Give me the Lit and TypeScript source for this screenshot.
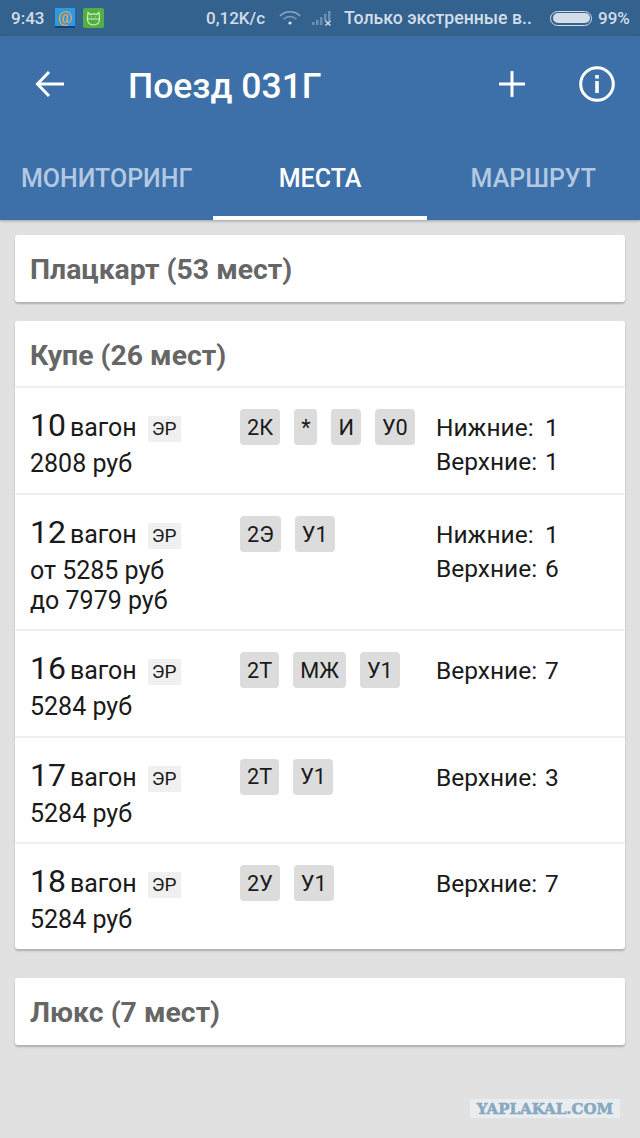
import {css, html, LitElement, svg} from 'lit';
import {customElement} from 'lit/decorators.js';

interface Car {
  num: string;
  prices: string[];
  chips: string[];
  lower?: number;
  upper: number;
}

const cars: Car[] = [
  {num: '10', prices: ['2808 руб'], chips: ['2К', '*', 'И', 'У0'], lower: 1, upper: 1},
  {num: '12', prices: ['от 5285 руб', 'до 7979 руб'], chips: ['2Э', 'У1'], lower: 1, upper: 6},
  {num: '16', prices: ['5284 руб'], chips: ['2Т', 'МЖ', 'У1'], upper: 7},
  {num: '17', prices: ['5284 руб'], chips: ['2Т', 'У1'], upper: 3},
  {num: '18', prices: ['5284 руб'], chips: ['2У', 'У1'], upper: 7},
];

const wifiIcon = svg`<svg class="wifi" viewBox="0 0 22 16" fill="none" stroke="#8fa9c4" stroke-width="1.5">
  <path d="M1 6a14 14 0 0 1 20 0" /><path d="M4.5 9.3a9 9 0 0 1 13 0" opacity=".8" /><circle cx="11" cy="13" r="1.6" fill="#dfe7f0" stroke="none" />
</svg>`;

const signalIcon = svg`<svg class="signal" viewBox="0 0 24 16">
  <g fill="#6f8fb0"><rect x="0" y="12" width="2.5" height="3" /><rect x="4" y="10" width="2.5" height="5" /><rect x="8" y="7" width="2.5" height="8" /><rect x="12" y="4" width="2.5" height="7" /><rect x="16" y="1" width="2.5" height="10" /></g>
  <path d="M13.5 11l5 4.5M18.5 11l-5 4.5" stroke="#dfe7f0" stroke-width="1.2" />
</svg>`;

@customElement('app-root')
export class AppRoot extends LitElement {
  renderCar(car: Car) {
    return html`
      <div class="row">
        <div class="info">
          <div class="head">
            <span class="num">${car.num}</span>
            <span class="word">вагон</span>
            <span class="tag">ЭР</span>
          </div>
          ${car.prices.map((p) => html`<div class="price">${p}</div>`)}
        </div>
        <div class="chips">${car.chips.map((c) => html`<span class="chip">${c}</span>`)}</div>
        <div class="seats">
          ${car.lower
            ? html`<div class="seat"><span class="label">Нижние:</span><span>${car.lower}</span></div>`
            : ''}
          <div class="seat"><span class="label">Верхние:</span><span>${car.upper}</span></div>
        </div>
      </div>
    `;
  }

  override render() {
    return html`
      <div class="status">
        <span class="time">9:43</span>
        <svg class="app mail" viewBox="0 0 20 20">
          <rect width="20" height="19" fill="#2a9be6" />
          <rect y="18" width="20" height="2" fill="#1b3f7a" />
          <text x="10" y="15" text-anchor="middle" font-family="Roboto" font-size="16" fill="#e0a24a">@</text>
        </svg>
        <svg class="app cat" viewBox="0 0 21 20">
          <rect width="21" height="20" rx="2" fill="#52b043" />
          <path d="M5 4.500l2.500 2a7 7 0 0 1 6 0l2.500-2 .5 5.500c.5 4.500-2 7-6 7s-6.500-2.500-6-7z" fill="none" stroke="#cfeec6" stroke-width="1.2" />
          <path d="M5 11h11" stroke="#cfeec6" stroke-width="1" />
          <path d="M8 9h.8M12.200 9h.8" stroke="#cfeec6" stroke-width="1.2" />
        </svg>
        <span class="speed">0,12K/с</span>
        ${wifiIcon}
        ${signalIcon}
        <span class="net">Только экстренные в..</span>
        <span class="battery"><span class="level"></span></span>
        <span class="pct">99%</span>
      </div>

      <header>
        <div class="toolbar">
          <svg class="back" viewBox="0 0 30 28" fill="none" stroke="#fff" stroke-width="3">
            <path d="M29 14H3" /><path d="M14 2L2.500 14 14 26" />
          </svg>
          <span class="title">Поезд 031Г</span>
          <svg class="plus" viewBox="0 0 26 26" fill="none" stroke="#fff" stroke-width="3">
            <path d="M13 0v26M0 13h26" />
          </svg>
          <svg class="about" viewBox="0 0 36 36" fill="none">
            <circle cx="18" cy="18" r="16.300" stroke="#fff" stroke-width="3" />
            <rect x="16.200" y="9" width="3.600" height="3.600" fill="#fff" />
            <rect x="16.200" y="15" width="3.600" height="12" fill="#fff" />
          </svg>
        </div>
        <nav>
          <span class="tab">МОНИТОРИНГ</span>
          <span class="tab active">МЕСТА</span>
          <span class="tab">МАРШРУТ</span>
        </nav>
      </header>

      <main>
        <section class="card"><h2>Плацкарт (53 мест)</h2></section>
        <section class="card">
          <h2 class="with-rows">Купе (26 мест)</h2>
          ${cars.map((c) => this.renderCar(c))}
        </section>
        <section class="card last"><h2>Люкс (7 мест)</h2></section>
      </main>

      <div class="mark"><span>YAPLAKAL.COM</span></div>
    `;
  }

  static override styles = css`
    :host {
      display: block;
      width: 640px;
      height: 1138px;
      overflow: hidden;
      background: #e1e1e1;
      font-family: Roboto, 'Noto Sans', sans-serif;
      color: #1a1a1a;
    }

    .status {
      height: 36px;
      background: #34628f;
      display: flex;
      align-items: center;
      color: #d3dde8;
      font-size: 17px;
      font-weight: 500;
      white-space: nowrap;
    }

    .time {
      margin-left: 11px;
      width: 44px;
    }

    .app {
      width: 20px;
      height: 20px;
    }

    .cat {
      width: 21px;
      margin-left: 8px;
      margin-right: 102px;
    }

    .speed {
      width: 73px;
    }

    .wifi {
      width: 22px;
      height: 16px;
    }

    .signal {
      width: 24px;
      height: 16px;
      margin-left: 11px;
      margin-right: 8px;
    }

    .net {
      width: 206px;
      font-size: 17.7px;
    }

    .battery {
      width: 42px;
      height: 15px;
      box-sizing: border-box;
      border: 1.5px solid #d3dde8;
      border-radius: 8px;
      padding: 1.5px;
      display: flex;
    }

    .level {
      flex: 1;
      background: #d3dde8;
      border-radius: 6px;
    }

    .pct {
      margin-left: 6px;
    }

    header {
      background: #3d6fa8;
      box-shadow: 0 1px 3px rgba(0, 0, 0, 0.3);
      position: relative;
    }

    .toolbar {
      height: 94px;
      box-sizing: border-box;
      padding-top: 2px;
      display: flex;
      align-items: center;
      color: #fff;
    }

    .back {
      width: 30px;
      height: 28px;
      margin-left: 35px;
    }

    .title {
      margin-left: 63px;
      margin-top: 3px;
      font-size: 35.5px;
      font-weight: 500;
      flex: 1;
    }

    .plus {
      width: 26px;
      height: 26px;
      margin-right: 54px;
    }

    .about {
      width: 36px;
      height: 36px;
      margin-right: 25px;
    }

    nav {
      height: 90px;
      display: grid;
      grid-template-columns: repeat(3, 1fr);
    }

    .tab {
      display: flex;
      align-items: center;
      justify-content: center;
      padding-top: 10px;
      font-size: 25px;
      font-weight: 500;
      color: #b3c9e2;
      box-sizing: border-box;
      border-bottom: 4px solid transparent;
    }

    .tab.active {
      color: #fff;
      border-bottom-color: #fff;
    }

    main {
      padding: 15px 15px 0;
      display: flex;
      flex-direction: column;
      gap: 19px;
    }

    .card {
      background: #fff;
      border-radius: 3px;
      box-shadow: 0 2px 2px rgba(0, 0, 0, 0.22);
    }

    .card.last {
      margin-top: 10px;
    }

    h2 {
      margin: 0;
      height: 67px;
      box-sizing: border-box;
      padding: 2px 0 0 15px;
      display: flex;
      align-items: center;
      font-size: 28.4px;
      font-weight: 700;
      color: #666;
    }

    h2.with-rows {
      height: 65px;
      padding-top: 3px;
    }

    .row {
      display: grid;
      grid-template-columns: 210px 196px 1fr;
      padding: 17px 0 14px 15px;
      border-top: 2px solid #eeeeee;
    }

    .head {
      display: flex;
      align-items: baseline;
      height: 40px;
    }

    .num {
      font-size: 32px;
      line-height: 40px;
    }

    .word {
      font-size: 25px;
      margin-left: 4px;
    }

    .tag {
      align-self: flex-start;
      margin-top: 11px;
      font-size: 19px;
      line-height: 26px;
      padding: 0 4px;
      margin-left: 11px;
      background: #f0f0f0;
    }

    .price {
      font-size: 25px;
      line-height: 29.5px;
    }

    .price:nth-child(2) {
      margin-top: 4px;
    }

    .chips {
      display: flex;
      align-items: flex-start;
      gap: 14px;
      height: 36px;
      margin-top: 4px;
    }

    .chip {
      height: 36px;
      box-sizing: border-box;
      padding: 0 7px;
      display: flex;
      align-items: center;
      background: #dcdcdc;
      border-radius: 4px;
      font-size: 21.7px;
    }

    .seats {
      font-size: 24.5px;
      line-height: 34px;
      margin-top: 6px;
    }

    .seat {
      display: flex;
    }

    .label {
      width: 109px;
    }

    .mark {
      position: absolute;
      left: 470px;
      top: 1099px;
      width: 150px;
      height: 19px;
      background: #e9edef;
      display: flex;
      align-items: center;
      justify-content: center;
      font-family: 'DejaVu Serif', serif;
      font-weight: 700;
      font-size: 15px;
      -webkit-text-stroke: 0.5px #86a8c0;
      color: #86a8c0;
      white-space: nowrap;
    }
  `;
}
